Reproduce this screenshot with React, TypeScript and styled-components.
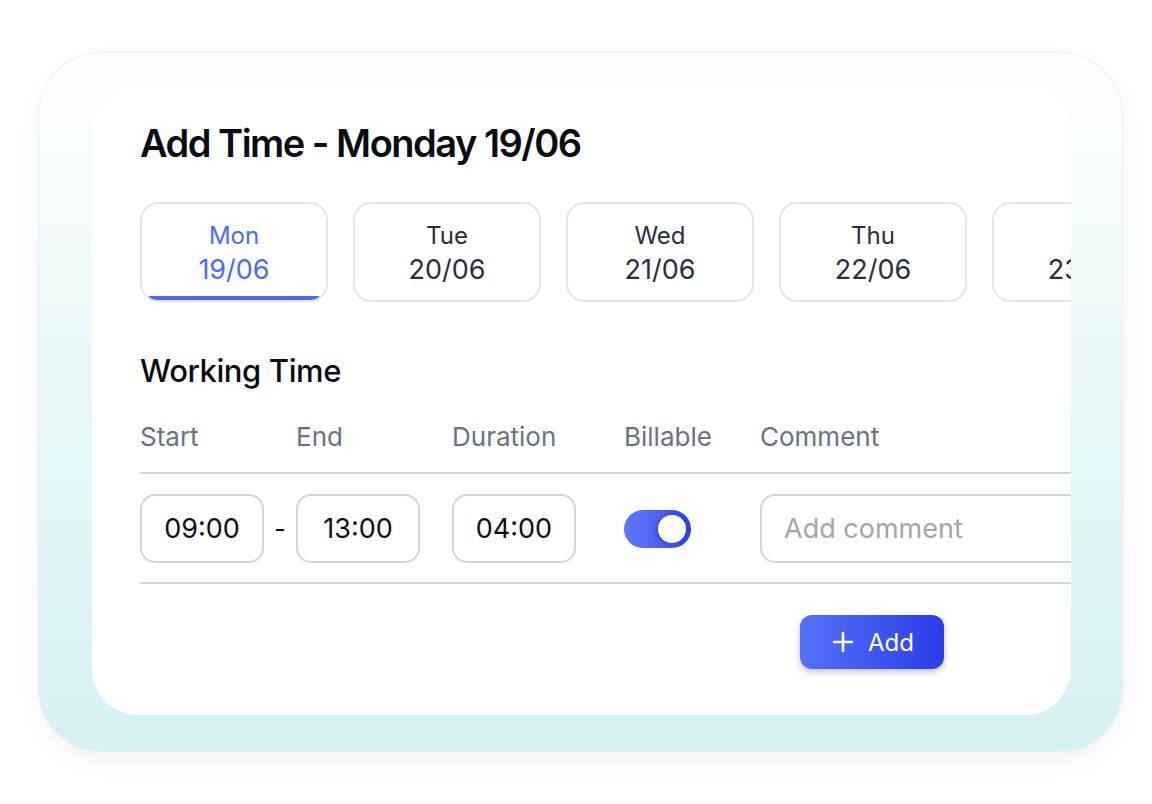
import React from 'react';
import styled, { createGlobalStyle } from 'styled-components';

const GlobalStyle = createGlobalStyle`
  html, body {
    margin: 0;
    padding: 0;
    background: #ffffff;
  }
  body {
    font-family: Inter, "Noto Sans", "Liberation Sans", sans-serif;
    -webkit-font-smoothing: antialiased;
  }
`;

const Page = styled.div`
  width: 1152px;
  height: 804px;
  padding: 53px 0 0 39px;
  box-sizing: border-box;
`;

const Frame = styled.div`
  width: 1083px;
  height: 698px;
  box-sizing: border-box;
  padding: 31px 51px 36px 53px;
  border-radius: 62px;
  background: linear-gradient(180deg, #fdfefe 0%, #eaf8f9 45%, #d5f1f4 100%);
  box-shadow: 0 0 0 1px rgba(225, 232, 234, 0.7), 0 10px 24px rgba(0, 0, 0, 0.05);
`;

const Card = styled.section`
  width: 979px;
  height: 631px;
  box-sizing: border-box;
  padding: 36px 0 0 48px;
  border-radius: 46px;
  background: #ffffff;
  overflow: hidden;
`;

const Title = styled.h1`
  margin: 0;
  font-size: 38px;
  line-height: 46px;
  font-weight: 600;
  letter-spacing: -1.5px;
  color: #0a0c14;
`;

const DayRow = styled.div`
  display: flex;
  gap: 25px;
  margin-top: 36px;
`;

const DayTab = styled.button<{ $active: boolean }>`
  position: relative;
  flex: 0 0 188px;
  height: 100px;
  box-sizing: border-box;
  border: 2px solid #e4e4ec;
  border-radius: 18px;
  background: #ffffff;
  overflow: hidden;
  display: flex;
  flex-direction: column;
  align-items: center;
  justify-content: center;
  gap: 4px;
  padding: 4px 0 0;
  font-family: inherit;
  color: ${({ $active }) => ($active ? '#4a6bf8' : '#2a2f3f')};
  &::after {
    content: '';
    display: ${({ $active }) => ($active ? 'block' : 'none')};
    position: absolute;
    left: 6px;
    right: 6px;
    bottom: 0;
    height: 4px;
    border-radius: 2px 2px 0 0;
    background: #4a6bf8;
  }
`;

const DayName = styled.span`
  font-size: 24px;
  line-height: 28px;
`;

const DayDate = styled.span`
  font-size: 27px;
  line-height: 32px;
`;

const SectionTitle = styled.h2`
  margin: 50px 0 0;
  font-size: 31px;
  line-height: 38px;
  font-weight: 500;
  letter-spacing: -0.4px;
  color: #0a0c14;
`;

const Grid = styled.div`
  display: grid;
  grid-template-columns: 156px 156px 172px 136px 1fr;
  width: 1000px;
`;

const HeaderRow = styled(Grid)`
  margin-top: 31px;
  padding-bottom: 19px;
  border-bottom: 2px solid #d6d8de;
`;

const HeaderCell = styled.div`
  font-size: 26px;
  line-height: 32px;
  color: #697282;
`;

const EntryRow = styled(Grid)`
  padding: 20px 0 19px;
  border-bottom: 2px solid #d6d8de;
  align-items: center;
`;

const Cell = styled.div`
  display: flex;
  align-items: center;
`;

const TimeBox = styled.div`
  width: 124px;
  height: 69px;
  box-sizing: border-box;
  border: 2px solid #d2d5dc;
  border-radius: 15px;
  display: flex;
  align-items: center;
  justify-content: center;
  font-size: 27px;
  color: #0d0f17;
`;

const Dash = styled.span`
  flex: 1;
  text-align: center;
  font-size: 25px;
  color: #0d0f17;
`;

const Toggle = styled.div`
  width: 67px;
  height: 38px;
  border-radius: 19px;
  background: linear-gradient(90deg, #5e78f7 0%, #4a62f3 55%, #2d3ce6 100%);
  display: flex;
  align-items: center;
  justify-content: flex-end;
  padding-right: 5px;
  box-sizing: border-box;
`;

const Knob = styled.span`
  width: 28px;
  height: 28px;
  border-radius: 50%;
  background: #ffffff;
  box-shadow: -2px 1px 4px rgba(20, 30, 140, 0.35);
`;

const CommentInput = styled.div`
  width: 420px;
  height: 69px;
  box-sizing: border-box;
  border: 2px solid #d2d5dc;
  border-radius: 15px;
  display: flex;
  align-items: center;
  padding-left: 22px;
  font-size: 27px;
  color: #a6a6a8;
`;

const AddButton = styled.button`
  margin: 31px 0 0 660px;
  width: 144px;
  height: 54px;
  border: none;
  border-radius: 12px;
  background: linear-gradient(90deg, #5571f8 0%, #3d55f0 55%, #2b3ce8 100%);
  box-shadow: 0 3px 6px rgba(30, 40, 120, 0.28);
  color: #ffffff;
  font-family: inherit;
  font-size: 24px;
  display: flex;
  align-items: center;
  justify-content: center;
  gap: 14px;
  padding: 0 0 0 2px;
`;

const days = [
  { name: 'Mon', date: '19/06' },
  { name: 'Tue', date: '20/06' },
  { name: 'Wed', date: '21/06' },
  { name: 'Thu', date: '22/06' },
  { name: 'Fri', date: '23/06' },
];

const App: React.FC = () => {
  return (
    <>
      <GlobalStyle />
      <Page>
        <Frame>
          <Card>
            <Title>Add Time - Monday 19/06</Title>
            <DayRow>
              {days.map((d, idx) => (
                <DayTab key={d.date} $active={idx === 0}>
                  <DayName>{d.name}</DayName>
                  <DayDate>{d.date}</DayDate>
                </DayTab>
              ))}
            </DayRow>
            <SectionTitle>Working Time</SectionTitle>
            <HeaderRow>
              <HeaderCell>Start</HeaderCell>
              <HeaderCell>End</HeaderCell>
              <HeaderCell>Duration</HeaderCell>
              <HeaderCell>Billable</HeaderCell>
              <HeaderCell>Comment</HeaderCell>
            </HeaderRow>
            <EntryRow>
              <Cell>
                <TimeBox>09:00</TimeBox>
                <Dash>-</Dash>
              </Cell>
              <Cell>
                <TimeBox>13:00</TimeBox>
              </Cell>
              <Cell>
                <TimeBox>04:00</TimeBox>
              </Cell>
              <Cell>
                <Toggle>
                  <Knob />
                </Toggle>
              </Cell>
              <Cell>
                <CommentInput>Add comment</CommentInput>
              </Cell>
            </EntryRow>
            <AddButton>
              <svg width="22" height="22" viewBox="0 0 22 22" fill="none">
                <path d="M11 2v18M2 11h18" stroke="#ffffff" strokeWidth="2.6" strokeLinecap="round" />
              </svg>
              Add
            </AddButton>
          </Card>
        </Frame>
      </Page>
    </>
  );
};

export default App;
